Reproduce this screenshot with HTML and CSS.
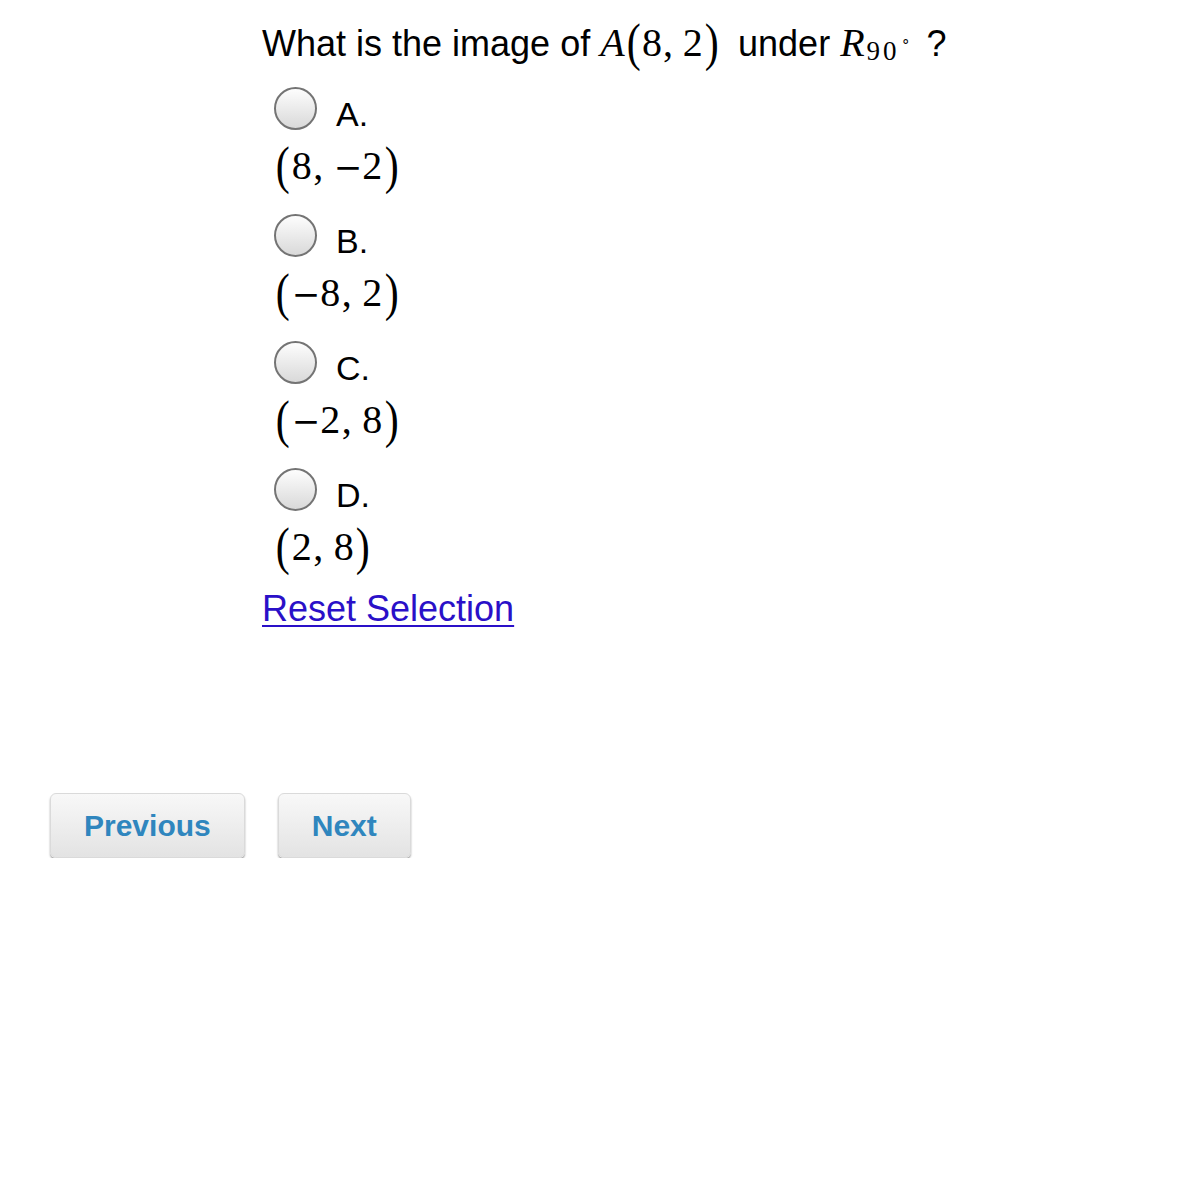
FILE: index.html
```html
<!DOCTYPE html>
<html lang="en">
<head>
    <title>Question</title>
    <link rel="stylesheet" href="styles.css">
</head>
<body>
    <div class="quiz">
        <p class="question">What is the image of <span class="math inline-math"><i>A</i><span class="paren">(</span>8,<span class="thin"></span>2<span class="paren">)</span></span> under <span class="math inline-math r-math"><i>R</i><sub class="sub">90<sup class="deg">∘</sup></sub></span> ?</p>

        <ul class="choices">
            <li class="choice">
                <label class="choice-row"><span class="radio"></span><span class="choice-label">A.</span></label>
                <div class="answer math"><span class="paren">(</span>8,<span class="thin"></span><span class="minus">−</span>2<span class="paren">)</span></div>
            </li>
            <li class="choice">
                <label class="choice-row"><span class="radio"></span><span class="choice-label">B.</span></label>
                <div class="answer math"><span class="paren">(</span><span class="minus">−</span>8,<span class="thin"></span>2<span class="paren">)</span></div>
            </li>
            <li class="choice">
                <label class="choice-row"><span class="radio"></span><span class="choice-label">C.</span></label>
                <div class="answer math"><span class="paren">(</span><span class="minus">−</span>2,<span class="thin"></span>8<span class="paren">)</span></div>
            </li>
            <li class="choice">
                <label class="choice-row"><span class="radio"></span><span class="choice-label">D.</span></label>
                <div class="answer math"><span class="paren">(</span>2,<span class="thin"></span>8<span class="paren">)</span></div>
            </li>
        </ul>

        <a class="reset-link" href="#">Reset Selection</a>
    </div>

    <div class="nav">
        <button class="nav-btn" type="button">Previous</button>
        <button class="nav-btn" type="button">Next</button>
    </div>
</body>
</html>
```

FILE: styles.css
```css
body {
    font-family: "Liberation Sans", Arial, sans-serif;
    color: #000;
    background-color: #fff;
    margin: 0;
    padding: 0;
}

.quiz {
    padding: 21px 0 0 262px;
}

.question {
    margin: 0;
    font-size: 36px;
    line-height: 43px;
}

.math {
    font-family: "Liberation Serif", "Times New Roman", serif;
    font-size: 40px;
    letter-spacing: 1.5px;
}

.inline-math {
    margin-right: 8px;
    letter-spacing: 1px;
}

.r-math {
    margin-right: 4px;
}

.math i {
    font-style: italic;
}

/* taller, thin brackets like the TeX ones */
.paren {
    display: inline-block;
    line-height: 40px;
    margin: 0 1px;
    transform: scale(1.05, 1.3);
}

/* the serif minus is too short, the DejaVu one has TeX width */
.minus {
    font-family: "DejaVu Sans", sans-serif;
    font-size: 34px;
    line-height: 0;
    letter-spacing: 0;
}

.thin {
    display: inline-block;
    width: 0.22em;
}

.sub {
    font-size: 27px;
    vertical-align: -4px;
    line-height: 0;
    letter-spacing: 3px;
    margin-left: 1px;
}

.deg {
    font-size: 15px;
    vertical-align: 14px;
    line-height: 0;
    margin-left: 1px;
}

.choices {
    list-style: none;
    margin: 22px 0 0 0;
    padding: 0;
    display: flex;
    flex-direction: column;
    gap: 24px;
}

.choice-row {
    display: flex;
    align-items: flex-start;
    height: 43px;
    margin-left: 12px;
}

.radio {
    width: 39px;
    height: 39px;
    border: 2px solid #747474;
    border-radius: 50%;
    background: linear-gradient(#fdfdfd, #d9d9d9);
}

.choice-label {
    font-size: 34px;
    line-height: 43px;
    padding-top: 6px;
    margin-left: 19px;
}

.answer {
    margin-top: 12px;
    padding-left: 13px;
    line-height: 48px;
}

.reset-link {
    display: inline-block;
    margin-top: 16px;
    font-size: 36px;
    line-height: 43px;
    color: #2a10c8;
    text-decoration: underline;
    text-decoration-thickness: 2px;
    text-underline-offset: 4px;
}

.nav {
    display: flex;
    gap: 33px;
    padding-left: 50px;
    margin-top: 163px;
}

.nav-btn {
    height: 65px;
    padding: 0 33px;
    font-family: "Liberation Sans", Arial, sans-serif;
    font-size: 30px;
    font-weight: bold;
    color: #2f86be;
    background: linear-gradient(#f8f8f8, #e3e3e3);
    border: 1px solid #dadada;
    border-radius: 6px;
    box-shadow: 0 2px 2px rgba(0, 0, 0, 0.35);
    cursor: pointer;
}
```
